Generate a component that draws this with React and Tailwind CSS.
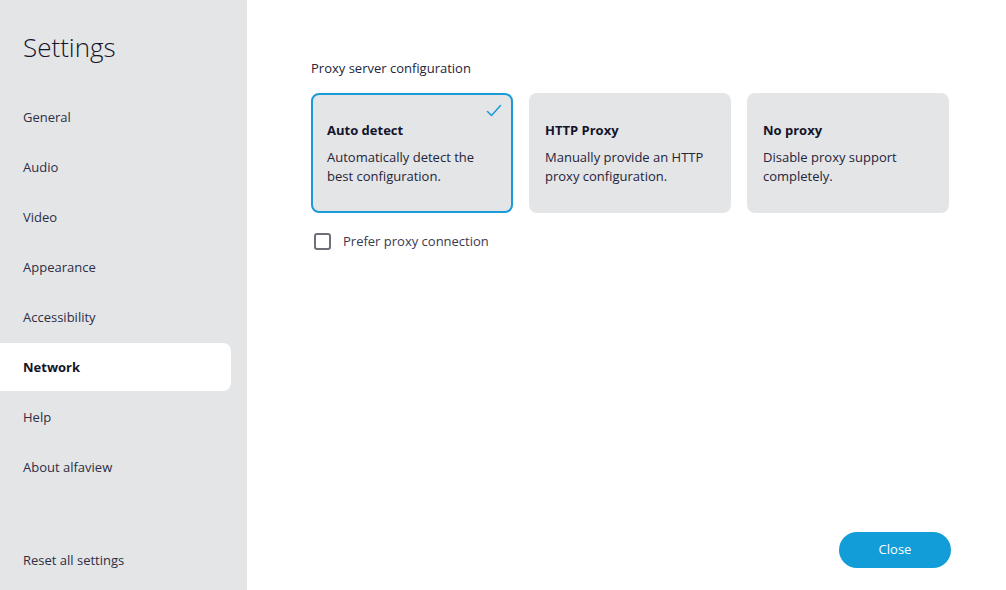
import React, { useState } from 'react';

const NAV = ['General', 'Audio', 'Video', 'Appearance', 'Accessibility', 'Network', 'Help', 'About alfaview'];

const OPTIONS = [
  { id: 'auto', title: 'Auto detect', desc: 'Automatically detect the best configuration.' },
  { id: 'http', title: 'HTTP Proxy', desc: 'Manually provide an HTTP proxy configuration.' },
  { id: 'none', title: 'No proxy', desc: 'Disable proxy support completely.' },
];

const OptionCard = ({ option, selected, onSelect }) => (
  <button
    onClick={() => onSelect(option.id)}
    className={`relative w-[202px] h-[120px] rounded-lg bg-[#e4e5e7] text-left flex flex-col justify-start items-start ${
      selected ? 'border-2 border-[#1a9bd7] px-[14px] pt-[25px]' : 'px-4 pt-[27px]'
    }`}
  >
    {selected && (
      <svg className="absolute right-[9px] top-[9px]" width="16" height="14" viewBox="0 0 16 14" fill="none">
        <path d="M1.5 7.5 L5.5 11.5 L14.5 1.5" stroke="#1a9bd7" strokeWidth="1.5" strokeLinecap="round" strokeLinejoin="round" />
      </svg>
    )}
    <div className="text-[13px] font-bold text-[#14142b] leading-[20px]">{option.title}</div>
    <p className="mt-[8px] text-[13px] text-[#24243a] leading-[19px]">{option.desc}</p>
  </button>
);

export default function App() {
  const [active, setActive] = useState('Network');
  const [proxy, setProxy] = useState('auto');
  const [prefer, setPrefer] = useState(false);

  return (
    <div className="flex w-[1006px] h-[590px] bg-white text-[#24243a]" style={{ fontFamily: '"Open Sans", "Noto Sans", sans-serif' }}>
      {/* Sidebar */}
      <aside className="w-[247px] h-full bg-[#e4e5e7] flex flex-col pr-4">
        <h1 className="pl-[23px] pt-[29px] text-[26px] font-light text-[#14142b] leading-[36px]">Settings</h1>
        <nav className="mt-[28px] flex flex-col gap-[2px]">
          {NAV.map((item) => (
            <button
              key={item}
              onClick={() => setActive(item)}
              className={`h-[48px] pl-[23px] pt-[1px] text-left text-[13px] rounded-r-lg ${
                active === item ? 'bg-white font-bold text-[#14142b]' : 'text-[#2e2e44]'
              }`}
            >
              {item}
            </button>
          ))}
        </nav>
        <button className="mt-auto mb-[20px] pl-[23px] text-left text-[13px] text-[#2e2e44]">Reset all settings</button>
      </aside>

      {/* Content */}
      <main className="flex-1 flex flex-col pl-[64px] pr-[55px] pt-[58px] pb-[22px]">
        <h2 className="text-[13px] text-[#24243a] leading-[20px]">Proxy server configuration</h2>
        <div className="mt-[15px] flex gap-4">
          {OPTIONS.map((o) => (
            <OptionCard key={o.id} option={o} selected={proxy === o.id} onSelect={setProxy} />
          ))}
        </div>
        <label className="mt-[19px] ml-[3px] flex items-center gap-3 cursor-pointer self-start">
          <input type="checkbox" className="sr-only" checked={prefer} onChange={() => setPrefer(!prefer)} />
          <span className="w-[17px] h-[17px] rounded-[3px] border-2 border-[#6f6f7a] bg-white flex items-center justify-center">
            {prefer && (
              <svg width="11" height="9" viewBox="0 0 11 9" fill="none">
                <path d="M1 4.5 L4 7.5 L10 1" stroke="#1a9bd7" strokeWidth="1.8" />
              </svg>
            )}
          </span>
          <span className="text-[13px] text-[#3a3a50]">Prefer proxy connection</span>
        </label>
        <div className="mt-auto flex justify-end">
          <button className="w-[112px] h-[36px] rounded-full bg-[#129dd8] text-white text-[13px]">Close</button>
        </div>
      </main>
    </div>
  );
}
